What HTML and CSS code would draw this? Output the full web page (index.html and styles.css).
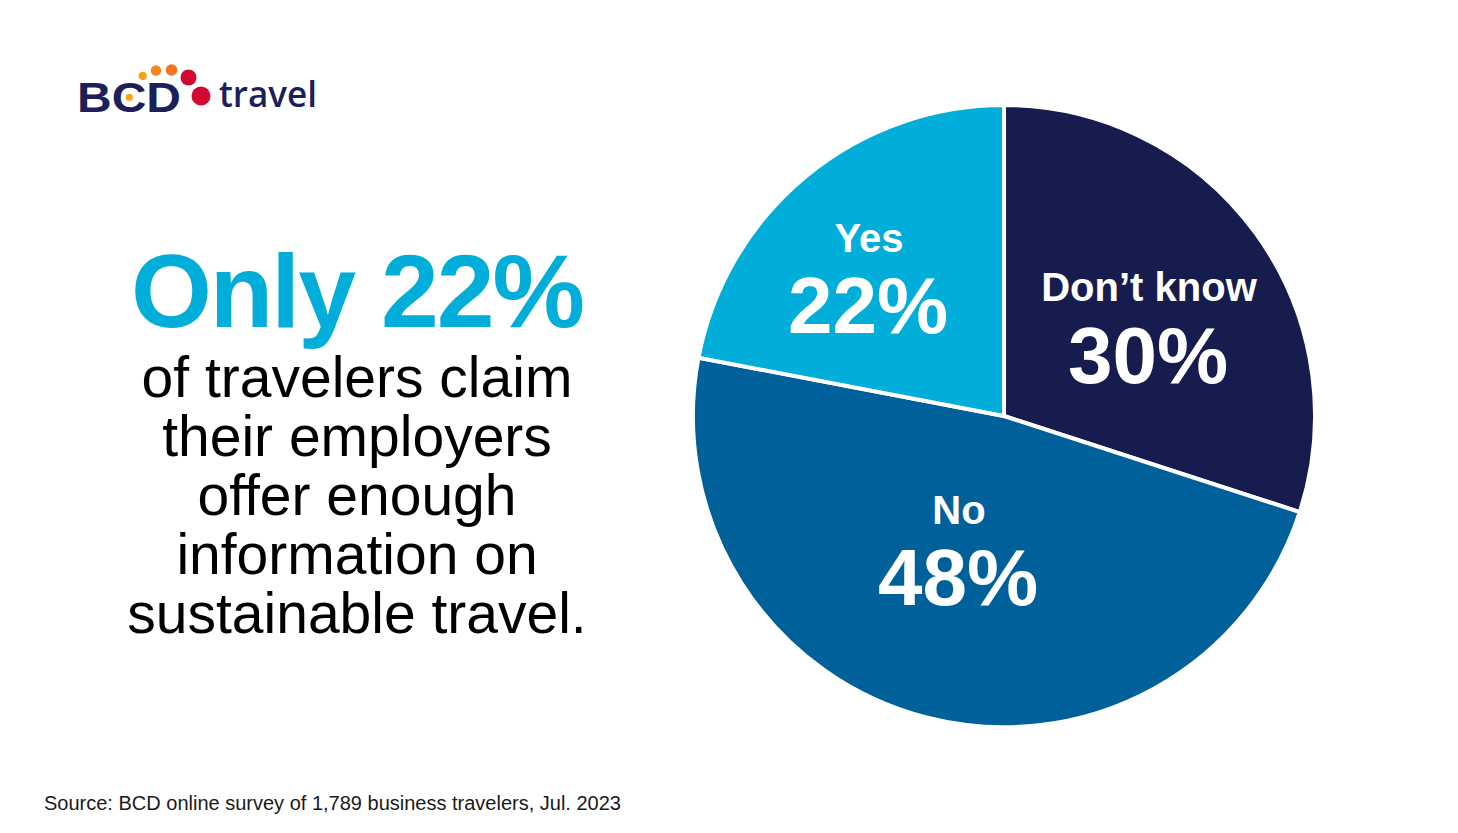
FILE: index.html
```html
<!DOCTYPE html>
<html lang="en">
<head>
<meta charset="utf-8">
<title>BCD travel – sustainable travel information</title>
<link rel="stylesheet" href="styles.css">
</head>
<body>
<div class="slide">
  <div class="left">
    <svg class="logo" width="250" height="60" viewBox="0 0 250 60" aria-label="BCD travel">
      <text class="logo-bcd" x="7" y="52" textLength="104" lengthAdjust="spacingAndGlyphs">BCD</text>
      <circle cx="59.3" cy="37.3" r="3.6" fill="#f9a51b"/>
      <circle cx="72.7" cy="15.9" r="4.2" fill="#f9a01b"/>
      <circle cx="86" cy="10.5" r="5.2" fill="#f6841f"/>
      <circle cx="101.5" cy="10" r="5.8" fill="#f47321"/>
      <circle cx="118.5" cy="17.5" r="8" fill="#d20a32"/>
      <circle cx="131" cy="36" r="9.5" fill="#d20a32"/>
      <text class="logo-travel" x="149" y="47" textLength="98" lengthAdjust="spacingAndGlyphs">travel</text>
    </svg>
    <div class="headline">
      <h1 class="big">Only 22%</h1>
      <p class="body">of travelers claim<br>their employers<br>offer enough<br>information on<br>sustainable travel.</p>
    </div>
    <p class="source">Source: BCD online survey of 1,789 business travelers, Jul. 2023</p>
  </div>
  <div class="right">
    <svg class="pie" width="640" height="640" viewBox="0 0 640 640">
      <path class="slice dk" d="M320,320 L320,9 A311,311 0 0 1 615.8,416.1 Z"/>
      <path class="slice no" d="M320,320 L615.8,416.1 A311,311 0 0 1 14.5,261.7 Z"/>
      <path class="slice yes" d="M320,320 L14.5,261.7 A311,311 0 0 1 320,9 Z"/>
      <text class="lbl" x="185" y="156">Yes</text>
      <text class="pct" x="184" y="237">22%</text>
      <text class="lbl" x="465" y="205">Don’t know</text>
      <text class="pct" x="464" y="287">30%</text>
      <text class="lbl" x="275" y="428">No</text>
      <text class="pct" x="274" y="509">48%</text>
    </svg>
  </div>
</div>
</body>
</html>
```
FILE: styles.css
```css
html, body {
  margin: 0;
  padding: 0;
  background: #ffffff;
}

.slide {
  width: 1458px;
  height: 833px;
  display: flex;
  flex-direction: row;
  overflow: hidden;
  font-family: "Liberation Sans", Arial, sans-serif;
}

.left {
  width: 684px;
  display: flex;
  flex-direction: column;
}

.logo {
  display: block;
  margin: 60px 0 0 70px;
}

.logo-bcd {
  font-family: "Liberation Sans", Arial, sans-serif;
  font-weight: 700;
  font-size: 43px;
  fill: #1b1f5a;
}

.logo-travel {
  font-family: "Open Sans", "Liberation Sans", sans-serif;
  font-weight: 600;
  font-size: 36px;
  fill: #1b1f5a;
}

.headline {
  margin-top: 119px;
  padding-left: 30px;
  text-align: center;
}

.big {
  margin: 0;
  font-size: 104px;
  line-height: 104px;
  font-weight: 700;
  letter-spacing: -2px;
  color: #00aed9;
}

.body {
  margin: 5px 0 0 0;
  font-size: 57px;
  line-height: 59px;
  font-weight: 400;
  color: #000000;
}

.source {
  margin: auto 0 18px 44px;
  font-size: 20px;
  line-height: 24px;
  color: #1a1a1a;
  white-space: nowrap;
}

.right {
  padding-top: 96px;
}

.pie {
  display: block;
}

.slice {
  stroke: #ffffff;
  stroke-width: 4;
  stroke-linejoin: miter;
}

.dk { fill: #161c4d; }
.no { fill: #00609a; }
.yes { fill: #00aed9; }

.lbl {
  font-family: "Liberation Sans", Arial, sans-serif;
  font-weight: 700;
  font-size: 40px;
  fill: #ffffff;
  text-anchor: middle;
}

.pct {
  font-family: "Liberation Sans", Arial, sans-serif;
  font-weight: 700;
  font-size: 80px;
  fill: #ffffff;
  text-anchor: middle;
}
```
